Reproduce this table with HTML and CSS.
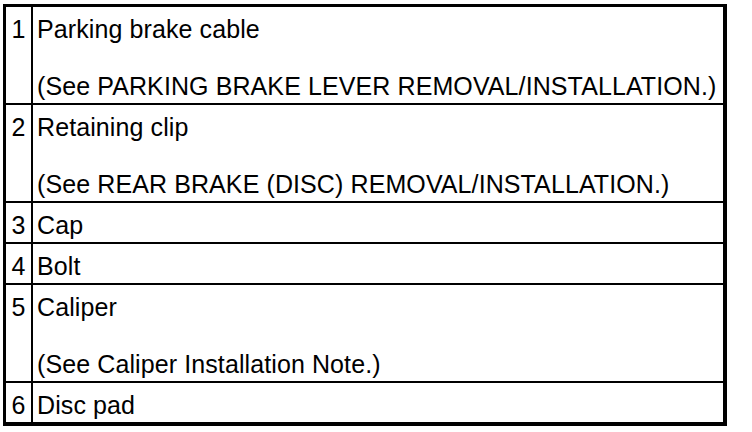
FILE: index.html
```html
<!DOCTYPE html>
<html>
<head>
<meta charset="utf-8">
<link rel="stylesheet" href="styles.css">
</head>
<body>
<table class="parts">
  <tr>
    <td class="num">1</td>
    <td class="desc"><p>Parking brake cable</p><p>(See PARKING BRAKE LEVER REMOVAL/INSTALLATION.)</p></td>
  </tr>
  <tr>
    <td class="num">2</td>
    <td class="desc"><p>Retaining clip</p><p>(See REAR BRAKE (DISC) REMOVAL/INSTALLATION.)</p></td>
  </tr>
  <tr>
    <td class="num">3</td>
    <td class="desc"><p>Cap</p></td>
  </tr>
  <tr>
    <td class="num">4</td>
    <td class="desc"><p>Bolt</p></td>
  </tr>
  <tr>
    <td class="num">5</td>
    <td class="desc"><p>Caliper</p><p>(See Caliper Installation Note.)</p></td>
  </tr>
  <tr class="last">
    <td class="num">6</td>
    <td class="desc"><p>Disc pad</p></td>
  </tr>
</table>
</body>
</html>
```
FILE: styles.css
```css
html, body {
  margin: 0;
  padding: 0;
  background: #fff;
}
body {
  padding: 4px 0 0 3px;
  font-family: "Liberation Sans", Arial, sans-serif;
  font-size: 25px;
  letter-spacing: 0.1px;
  color: #000;
}
.parts {
  border-collapse: separate;
  border-spacing: 0;
  width: 724px;
  border-style: solid;
  border-color: #000;
  border-width: 3px 4px 4px 3px;
}
.parts td {
  vertical-align: top;
  padding: 0;
  line-height: 28px;
  border-bottom: 2px solid #000;
}
.parts .last td {
  border-bottom: 0;
}
.parts .num {
  width: 25px;
  text-align: center;
  padding-top: 8px;
  border-right: 2px solid #000;
}
.parts .desc {
  padding: 8px 2px 3px 4px;
}
.parts p {
  margin: 0;
  white-space: nowrap;
}
.parts p + p {
  margin-top: 29px;
}
```
